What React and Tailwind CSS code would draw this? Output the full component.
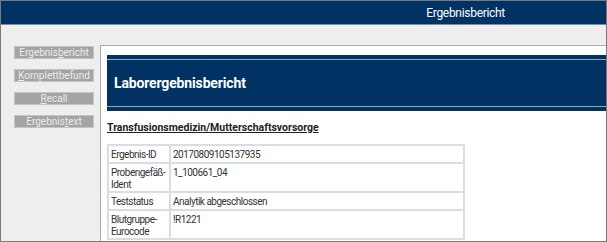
import React from 'react';

const rows = [
  { label: ['Ergebnis-ID'], value: '20170809105137935', h: 'h-[18px]' },
  { label: ['Probengefäß-', 'Ident'], value: '1_100661_04', h: 'h-[29px]' },
  { label: ['Teststatus'], value: 'Analytik abgeschlossen', h: 'h-[18px]' },
  { label: ['Blutgruppe-', 'Eurocode'], value: '!R1221', h: 'h-[29px]' },
];

// Sidebar buttons with access-key underline
const SideButton = ({ before, mark, after }) => (
  <div className="w-[80px] h-[13px] bg-[#a4a4a4] border border-[#c4c4c4] flex items-center justify-center text-[10px] leading-none text-[#ececec]">
    <span>
      {before}
      <u>{mark}</u>
      {after}
    </span>
  </div>
);

export default function App() {
  return (
    <div
      className="w-[607px] h-[242px] border border-[#7a7a7a] bg-[#eeeeee] flex flex-col overflow-hidden"
      style={{ fontFamily: 'Roboto, "Liberation Sans", sans-serif' }}
    >
      {/* Top header */}
      <div className="h-[24px] shrink-0 bg-[#003263] border-b border-[#6e8fb6] flex items-center justify-end pr-[101px]">
        <span className="text-[12px] text-white tracking-[-0.3px]">Ergebnisbericht</span>
      </div>

      <div className="flex flex-1 min-h-0">
        {/* Sidebar */}
        <div className="w-[99px] shrink-0 pl-[13px] pt-[21px] flex flex-col gap-[10px]">
          <SideButton before="Ergebnis" mark="b" after="ericht" />
          <SideButton before="" mark="K" after="omplettbefund" />
          <SideButton before="" mark="R" after="ecall" />
          <SideButton before="Ergebnis" mark="t" after="ext" />
        </div>

        {/* Content panel */}
        <div className="flex-1 mt-[20px] bg-white border-l border-t border-[#a9a9a9] pl-[6px] pt-[9px] flex flex-col">
          <div className="h-[56px] bg-[#003263] py-[4px] flex flex-col">
            <div className="flex-1 border-y border-[#8ea6c4] flex items-center pl-[7px]">
              <span className="text-[14px] font-bold text-white tracking-[-0.15px]">Laborergebnisbericht</span>
            </div>
          </div>

          <div className="mt-[12px] text-[10.5px] font-bold underline text-[#222] leading-none">
            Transfusionsmedizin/Mutterschaftsvorsorge
          </div>

          <table className="mt-[10px] w-[358px] border-collapse text-[10px] text-[#333] leading-[12px] tracking-[-0.5px]">
            <tbody>
              {rows.map((r) => (
                <tr key={r.value} className={r.h}>
                  <td className="w-[62px] border-2 border-[#d6dfe9] align-top px-[2px] pt-[3px]">
                    {r.label.map((l, i) => (
                      <div key={i}>{l}</div>
                    ))}
                  </td>
                  <td className="border-2 border-[#d6dfe9] align-top px-[2px] pt-[3px]">{r.value}</td>
                </tr>
              ))}
            </tbody>
          </table>
        </div>
      </div>
    </div>
  );
}
